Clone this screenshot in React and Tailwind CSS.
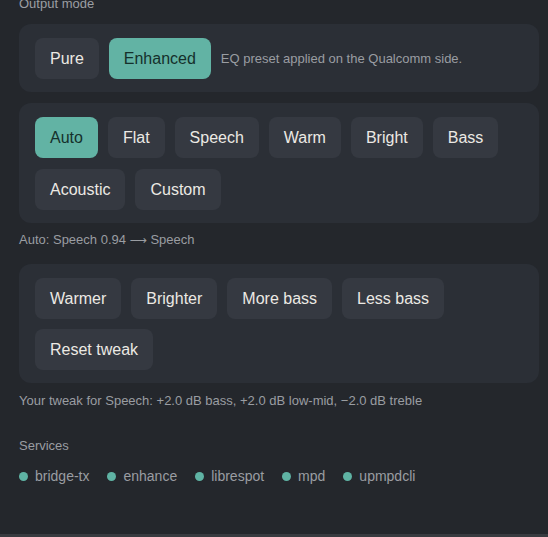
import React from "react";

const font = { fontFamily: '"Liberation Sans", Arial, sans-serif' };

function Btn({ children, active }) {
  return (
    <button
      className={
        active
          ? "h-[41px] rounded-lg px-[15px] text-[16px] bg-[#62b3a4] text-[#15302b]"
          : "h-[41px] rounded-lg px-[15px] text-[16px] bg-[#353941] text-[#ece9e4]"
      }
    >
      {children}
    </button>
  );
}

function Card({ children, className = "" }) {
  return (
    <div className={"rounded-xl bg-[#2b2f36] px-4 pt-[14px] pb-[13px] " + className}>
      {children}
    </div>
  );
}

export default function App() {
  const presets = ["Auto", "Flat", "Speech", "Warm", "Bright", "Bass", "Acoustic", "Custom"];
  const tweaks = ["Warmer", "Brighter", "More bass", "Less bass", "Reset tweak"];
  const services = ["bridge-tx", "enhance", "librespot", "mpd", "upmpdcli"];
  return (
    <div className="relative h-[537px] w-[548px] overflow-hidden bg-[#24272c]" style={font}>
      <div className="ml-[19px] w-[520px] -mt-[5px]">
        <div className="text-[13px] leading-[18px] text-[#9b9ea3]">Output mode</div>
        <Card className="mt-[11px] flex items-center gap-[10px]">
          <Btn>Pure</Btn>
          <Btn active>Enhanced</Btn>
          <span className="text-[13px] text-[#9a9da2]">EQ preset applied on the Qualcomm side.</span>
        </Card>
        <Card className="mt-[11px] flex flex-wrap gap-x-[10px] gap-y-[11px]">
          {presets.map((p) => (
            <Btn key={p} active={p === "Auto"}>{p}</Btn>
          ))}
        </Card>
        <div className="mt-[8px] text-[13px] leading-[18px] text-[#9a9da2]">
          Auto: Speech 0.94 <span style={{ fontFamily: '"DejaVu Sans", sans-serif' }} className="text-[12px]">⟶</span> Speech
        </div>
        <Card className="mt-[15px] flex flex-wrap gap-x-[10px] gap-y-[10px]">
          {tweaks.map((p) => (
            <Btn key={p}>{p}</Btn>
          ))}
        </Card>
        <div className="mt-[9px] text-[13px] leading-[18px] text-[#9a9da2]">
          Your tweak for Speech: +2.0 dB bass, +2.0 dB low-mid, −2.0 dB treble
        </div>
        <div className="mt-[27px] text-[13px] leading-[18px] text-[#9a9da2]">Services</div>
        <div className="mt-[12px] flex items-center gap-[18px]">
          {services.map((s) => (
            <div key={s} className="flex items-center gap-[7px]">
              <span className="h-[9px] w-[9px] rounded-full bg-[#5fb3a4]" />
              <span className="text-[14px] leading-[18px] text-[#9a9da2]">{s}</span>
            </div>
          ))}
        </div>
      </div>
      <div className="absolute bottom-0 left-0 h-[3px] w-full bg-[#383b40]" />
    </div>
  );
}
